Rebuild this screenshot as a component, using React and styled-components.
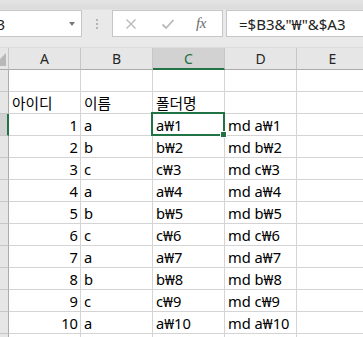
import React from "react";
import styled, { createGlobalStyle } from "styled-components";

const GlobalStyle = createGlobalStyle`
  html, body {
    margin: 0;
    padding: 0;
    background: #ffffff;
    overflow: hidden;
  }
  * {
    box-sizing: border-box;
  }
`;

const FONT = `"Noto Sans", "Noto Sans CJK KR", sans-serif`;
const COLUMNS = ["A", "B", "C", "D", "E"];
const NAMES = ["a", "b", "c", "a", "b", "c", "a", "b", "c", "a"];

const rows = [
  ["", "", "", "", ""],
  ["아이디", "이름", "폴더명", "", ""],
  ...NAMES.map((n, i) => [i + 1, n, `${n}₩${i + 1}`, `md ${n}₩${i + 1}`, ""]),
  ["", "", "", "", ""],
];

export default function App() {
  return (
    <Window>
      <GlobalStyle />
      <Bar>
        <NameBox>
          <NameText>C3</NameText>
          <Caret />
        </NameBox>
        <Grip>
          <span />
          <span />
          <span />
        </Grip>
        <FxButtons>
          <IconSlot $gap={12}>
            <svg width="12" height="12" viewBox="0 0 12 12">
              <path d="M1.5 1.5 L10.5 10.5 M10.5 1.5 L1.5 10.5" stroke="#b9b9b9" strokeWidth="1.4" fill="none" />
            </svg>
          </IconSlot>
          <IconSlot $gap={24}>
            <svg width="14" height="12" viewBox="0 0 14 12">
              <path d="M1.5 6.5 L5 10 L12.5 2" stroke="#b9b9b9" strokeWidth="1.8" fill="none" />
            </svg>
          </IconSlot>
          <IconSlot $gap={21}>
            <FxLabel>fx</FxLabel>
          </IconSlot>
        </FxButtons>
        <FormulaInput>=$B3&amp;"₩"&amp;$A3</FormulaInput>
      </Bar>
      <Sheet>
        <Corner>
          <svg width="8" height="21" viewBox="0 0 8 21">
            <polygon points="6,5 6,18 -7,18" fill="#b8b8b8" />
          </svg>
        </Corner>
        {COLUMNS.map((c) => (
          <ColHeader key={c} $active={c === "C"}>
            {c}
          </ColHeader>
        ))}
        {rows.map((row, r) => (
          <React.Fragment key={r}>
            <RowHeader $active={r === 2} />
            {row.map((v, c) => (
              <Cell key={c} $right={typeof v === "number"} $selected={r === 2 && c === 2}>
                {v}
              </Cell>
            ))}
          </React.Fragment>
        ))}
      </Sheet>
    </Window>
  );
}

const Window = styled.div`
  width: 363px;
  height: 337px;
  overflow: hidden;
  font-family: ${FONT};
`;

const Bar = styled.div`
  height: 48px;
  display: flex;
  align-items: flex-start;
  padding-top: 10px;
  background: linear-gradient(#e4e4e4 0px, #dbdbdb 9px, #e9e9e9 10px, #e9e9e9 100%);
  border-bottom: 1px solid #dcdcdc;
`;

const Box = styled.div`
  height: 27px;
  background: #ffffff;
  border: 1px solid #c6c6c6;
  display: flex;
  align-items: center;
`;

const NameBox = styled(Box)`
  width: 82px;
  border-left: none;
  overflow: hidden;
  justify-content: space-between;
  padding-right: 6px;
`;

const NameText = styled.span`
  margin-left: -13px;
  font-size: 15px;
  color: #222;
`;

const Caret = styled.span`
  width: 0;
  height: 0;
  border-left: 3.5px solid transparent;
  border-right: 3.5px solid transparent;
  border-top: 4px solid #7a7a7a;
`;

const Grip = styled.div`
  width: 30px;
  height: 27px;
  display: flex;
  flex-direction: column;
  align-items: center;
  justify-content: center;
  gap: 2px;
  span {
    width: 2px;
    height: 2px;
    background: #b4b4b4;
  }
`;

const FxButtons = styled(Box)`
  width: 111px;
  justify-content: flex-start;
`;

const IconSlot = styled.span`
  display: flex;
  align-items: center;
  margin-left: ${(p) => p.$gap}px;
`;

const FxLabel = styled.span`
  font-family: "Liberation Serif", serif;
  font-style: italic;
  font-size: 15px;
  color: #6a6a6a;
  letter-spacing: -0.5px;
`;

const FormulaInput = styled(Box)`
  flex: 1;
  margin-left: 3px;
  border-right: none;
  padding-left: 12px;
  font-size: 15px;
  color: #222;
  white-space: nowrap;
`;

const Sheet = styled.div`
  display: grid;
  grid-template-columns: 9px repeat(5, 72px);
  grid-auto-rows: 22px;
  font-size: 14.7px;
`;

const Corner = styled.div`
  background: #e6e6e6;
  border-right: 1px solid #c6c6c6;
  border-bottom: 1px solid #ababab;
  display: flex;
  align-items: flex-start;
`;

const ColHeader = styled.div`
  display: flex;
  align-items: center;
  justify-content: center;
  background: ${(p) => (p.$active ? "#d2d2d2" : "#e6e6e6")};
  color: ${(p) => (p.$active ? "#1f6e43" : "#262626")};
  border-right: 1px solid #c6c6c6;
  border-bottom: ${(p) => (p.$active ? "2px solid #217346" : "1px solid #ababab")};
  padding-top: ${(p) => (p.$active ? "1px" : "0")};
  font-size: 14px;
`;

const RowHeader = styled.div`
  background: ${(p) => (p.$active ? "#d2d2d2" : "#e6e6e6")};
  border-right: ${(p) => (p.$active ? "2px solid #217346" : "1px solid #ababab")};
  border-bottom: 1px solid #c6c6c6;
`;

const Cell = styled.div`
  position: relative;
  display: flex;
  align-items: center;
  justify-content: ${(p) => (p.$right ? "flex-end" : "flex-start")};
  padding: 0 2px 0 3px;
  border-right: 1px solid #d4d4d4;
  border-bottom: 1px solid #d4d4d4;
  color: #000;
  white-space: nowrap;
  ${(p) =>
    p.$selected &&
    `
    &::after {
      content: "";
      position: absolute;
      left: -2px;
      top: -2px;
      right: -1px;
      bottom: -1px;
      border: 2px solid #217346;
    }
    &::before {
      content: "";
      position: absolute;
      right: -3px;
      bottom: -3px;
      width: 5px;
      height: 5px;
      background: #217346;
      border: 1px solid #fff;
      z-index: 1;
    }
  `}
`;
